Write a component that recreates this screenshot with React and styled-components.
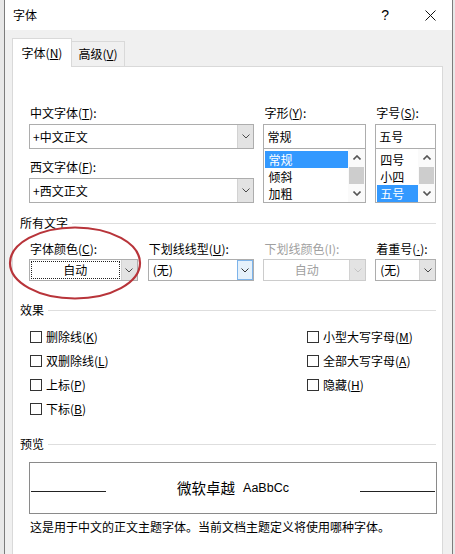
import React from "react"
import styled, { createGlobalStyle } from "styled-components"

const GlobalStyle = createGlobalStyle`
  html, body {
    margin: 0;
    padding: 0;
  }
  body {
    background: #e8e8e8;
    font-family: "Noto Sans CJK SC", "Microsoft YaHei", sans-serif;
    font-size: 12px;
    color: #000;
  }
`

const Window = styled.div`
  margin-left: 4px;
  width: 449px;
  height: 554px;
  box-sizing: border-box;
  border-left: 1px solid #7c7c7c;
  border-right: 1px solid #7c7c7c;
  background: #f0f0f0;
  overflow: hidden;
  display: flex;
  flex-direction: column;
`

const TitleBar = styled.div`
  height: 30px;
  flex: none;
  background: #fff;
  display: flex;
  align-items: center;
  padding-left: 8px;
  padding-right: 16px;
`

const Title = styled.span`
  font-size: 12px;
  line-height: 16px;
`

const HelpButton = styled.span`
  margin-left: auto;
  margin-right: 36px;
  font-family: "Liberation Sans", Arial, sans-serif;
  font-size: 14px;
  line-height: 16px;
`

const Body = styled.div`
  padding: 8px 9px 0 7px;
`

const TabRow = styled.div`
  display: flex;
  align-items: flex-end;
  height: 28px;
`

const Tab = styled.div`
  box-sizing: border-box;
  width: ${(p) => (p.$active ? "60px" : "53px")};
  height: ${(p) => (p.$active ? "29px" : "25px")};
  margin-bottom: ${(p) => (p.$active ? "-1px" : "0")};
  position: relative;
  z-index: ${(p) => (p.$active ? 1 : 0)};
  background: ${(p) => (p.$active ? "#fff" : "#f0f0f0")};
  border: 1px solid #d9d9d9;
  border-bottom: none;
  border-left: ${(p) => (p.$active ? "1px solid #d9d9d9" : "none")};
  display: flex;
  align-items: center;
  justify-content: center;
  line-height: 16px;
`

const Panel = styled.div`
  position: relative;
  height: 520px;
  background: #fff;
  border: 1px solid #d9d9d9;
`

const Content = styled.div`
  padding: 38px 6px 0 7px;
`

const Acc = styled.u`
  text-underline-offset: 1px;
`

const Dot = styled.u`
  font-family: "Liberation Sans", Arial, sans-serif;
  text-underline-offset: 1px;
`

const Label = styled.div`
  height: 16px;
  line-height: 16px;
  padding-left: 1px;
  white-space: nowrap;
  margin-top: ${(p) => p.$mt || 0}px;
  color: ${(p) => (p.$disabled ? "#a0a0a0" : "#000")};
`

const FontGrid = styled.div`
  display: flex;
  gap: 9px;
  margin-left: 9px;
`

const Column = styled.div`
  width: ${(p) => p.$w}px;
  display: flex;
  flex-direction: column;
`

const TextBox = styled.div`
  box-sizing: border-box;
  height: 25px;
  margin-top: 3px;
  border: 1px solid #adadad;
  display: flex;
  background: #fff;
`

const BoxText = styled.div`
  flex: 1;
  padding-left: 3px;
  display: flex;
  align-items: center;
  line-height: 16px;
`

const DropButton = styled.div`
  width: 16px;
  flex: none;
  box-sizing: border-box;
  background: ${(p) => (p.$hot ? "#e5f1fb" : "#e3e3e3")};
  border: ${(p) => (p.$hot ? "1px solid #7eb4ea" : "none")};
  border-left: 1px solid ${(p) => (p.$hot ? "#7eb4ea" : "#d2d2d2")};
  display: flex;
  align-items: center;
  justify-content: center;
`

const ListBox = styled.div`
  box-sizing: border-box;
  height: 55px;
  margin-top: -1px;
  border: 1px solid #adadad;
  display: flex;
  background: #fff;
`

const ListItems = styled.div`
  flex: 1;
  padding: 2px 0 0 1px;
`

const ListItem = styled.div`
  height: 17px;
  line-height: 17px;
  padding-left: 3px;
  background: ${(p) => (p.$selected ? "#3399ff" : "transparent")};
  color: ${(p) => (p.$selected ? "#fff" : "#000")};
`

const ScrollBar = styled.div`
  width: 17px;
  flex: none;
  background: #fafafa;
  display: flex;
  flex-direction: column;
`

const ScrollArrow = styled.div`
  height: 17px;
  display: flex;
  align-items: center;
  justify-content: center;
`

const ScrollTrack = styled.div`
  flex: 1;
  padding: 1px 1px 0;
`

const ScrollThumb = styled.div`
  height: 17px;
  background: #cdcdcd;
`

const SectionHeader = styled.div`
  display: flex;
  align-items: center;
  height: 16px;
  line-height: 16px;
  margin-top: ${(p) => p.$mt}px;
`

const HeaderLine = styled.div`
  flex: 1;
  height: 1px;
  margin-left: 4px;
  background: #dedede;
`

const ComboRow = styled.div`
  display: flex;
  margin-left: 9px;
  margin-top: 10px;
`

const ComboCol = styled.div`
  width: ${(p) => p.$w}px;
  margin-left: ${(p) => p.$ml || 0}px;
`

const Combo = styled.div`
  box-sizing: border-box;
  height: 22px;
  margin-top: 2px;
  border: 1px solid ${(p) => (p.$disabled ? "#cccccc" : "#adadad")};
  display: flex;
  background: #fff;
`

const ComboValue = styled.div`
  flex: 1;
  display: flex;
  align-items: center;
  justify-content: ${(p) => (p.$center ? "center" : "flex-start")};
  padding-left: ${(p) => (p.$center ? 0 : 4)}px;
  margin: ${(p) => (p.$focus ? "1px" : "0")};
  border: ${(p) => (p.$focus ? "1px dotted #222" : "none")};
  color: ${(p) => (p.$disabled ? "#a0a0a0" : "#000")};
  line-height: 16px;
`

const Checks = styled.div`
  display: flex;
  margin-left: 10px;
  margin-top: 7px;
`

const CheckCol = styled.div`
  width: ${(p) => p.$w || "auto"};
  display: flex;
  flex-direction: column;
`

const CheckRow = styled.label`
  height: 24px;
  display: flex;
  align-items: center;
  gap: 4px;
  line-height: 16px;
  white-space: nowrap;
`

const CheckBox = styled.span`
  width: 12px;
  height: 12px;
  box-sizing: border-box;
  border: 1px solid #333;
  background: #fff;
`

const PreviewBox = styled.div`
  box-sizing: border-box;
  width: 408px;
  height: 52px;
  margin: 10px 0 0 9px;
  border: 1px solid #8a8a8a;
  display: flex;
  align-items: center;
`

const PreviewLine = styled.div`
  width: 75px;
  height: 1px;
  margin: 7px 1px 0;
  background: #222;
`

const PreviewText = styled.div`
  flex: 1;
  display: flex;
  align-items: center;
  justify-content: center;
  gap: 8px;
`

const PreviewCjk = styled.span`
  font-size: 14.5px;
  line-height: 18px;
`

const PreviewLatin = styled.span`
  font-family: "Liberation Sans", Arial, sans-serif;
  font-size: 12.5px;
  line-height: 18px;
`

const Description = styled.div`
  margin: 5px 0 0 10px;
  line-height: 16px;
`

const Annotation = styled.svg`
  position: absolute;
  left: -5px;
  top: 158px;
  overflow: visible;
  pointer-events: none;
`

const Chevron = ({ up, color = "#4a4a4a", width = 1 }) => (
  <svg width="8" height="5" viewBox="0 0 8 5">
    <polyline
      points={up ? "0.5,4.5 4,1 7.5,4.5" : "0.5,0.5 4,4 7.5,0.5"}
      fill="none"
      stroke={color}
      strokeWidth={width}
    />
  </svg>
)

const List = ({ items, selected }) => (
  <ListBox>
    <ListItems>
      {items.map((it) => (
        <ListItem key={it} $selected={it === selected}>
          {it}
        </ListItem>
      ))}
    </ListItems>
    <ScrollBar>
      <ScrollArrow>
        <Chevron up color="#555" width={1.6} />
      </ScrollArrow>
      <ScrollTrack>
        <ScrollThumb />
      </ScrollTrack>
      <ScrollArrow>
        <Chevron color="#555" width={1.6} />
      </ScrollArrow>
    </ScrollBar>
  </ListBox>
)

const leftChecks = [
  ["删除线", "K"],
  ["双删除线", "L"],
  ["上标", "P"],
  ["下标", "B"],
]

const rightChecks = [
  ["小型大写字母", "M"],
  ["全部大写字母", "A"],
  ["隐藏", "H"],
]

export default function App() {
  return (
    <>
      <GlobalStyle />
      <Window>
        <TitleBar>
          <Title>字体</Title>
          <HelpButton>?</HelpButton>
          <svg width="11" height="11" viewBox="0 0 11 11">
            <path d="M0.5 0.5 L10.5 10.5 M10.5 0.5 L0.5 10.5" stroke="#111" strokeWidth="1" />
          </svg>
        </TitleBar>
        <Body>
          <TabRow>
            <Tab $active>
              字体(<Acc>N</Acc>)
            </Tab>
            <Tab>
              高级(<Acc>V</Acc>)
            </Tab>
          </TabRow>
          <Panel>
            <Content>
              <FontGrid>
                <Column $w={226}>
                  <Label>
                    中文字体(<Acc>T</Acc>):
                  </Label>
                  <TextBox>
                    <BoxText>+中文正文</BoxText>
                    <DropButton>
                      <Chevron />
                    </DropButton>
                  </TextBox>
                  <Label $mt={10}>
                    西文字体(<Acc>F</Acc>):
                  </Label>
                  <TextBox>
                    <BoxText>+西文正文</BoxText>
                    <DropButton>
                      <Chevron />
                    </DropButton>
                  </TextBox>
                </Column>
                <Column $w={103}>
                  <Label>
                    字形(<Acc>Y</Acc>):
                  </Label>
                  <TextBox>
                    <BoxText>常规</BoxText>
                  </TextBox>
                  <List items={["常规", "倾斜", "加粗"]} selected="常规" />
                </Column>
                <Column $w={61}>
                  <Label>
                    字号(<Acc>S</Acc>):
                  </Label>
                  <TextBox>
                    <BoxText>五号</BoxText>
                  </TextBox>
                  <List items={["四号", "小四", "五号"]} selected="五号" />
                </Column>
              </FontGrid>

              <SectionHeader $mt={12}>
                所有文字
                <HeaderLine />
              </SectionHeader>
              <ComboRow>
                <ComboCol $w={109}>
                  <Label>
                    字体颜色(<Acc>C</Acc>):
                  </Label>
                  <Combo>
                    <ComboValue $center $focus>
                      自动
                    </ComboValue>
                    <DropButton>
                      <Chevron />
                    </DropButton>
                  </Combo>
                </ComboCol>
                <ComboCol $w={107} $ml={10}>
                  <Label>
                    下划线线型(<Acc>U</Acc>):
                  </Label>
                  <Combo>
                    <ComboValue>(无)</ComboValue>
                    <DropButton $hot>
                      <Chevron color="#333" />
                    </DropButton>
                  </Combo>
                </ComboCol>
                <ComboCol $w={103} $ml={9}>
                  <Label $disabled>下划线颜色(I):</Label>
                  <Combo $disabled>
                    <ComboValue $center $disabled>
                      自动
                    </ComboValue>
                    <DropButton>
                      <Chevron color="#c4c4c4" />
                    </DropButton>
                  </Combo>
                </ComboCol>
                <ComboCol $w={61} $ml={9}>
                  <Label>
                    着重号(<Dot>·</Dot>):
                  </Label>
                  <Combo>
                    <ComboValue>(无)</ComboValue>
                    <DropButton>
                      <Chevron />
                    </DropButton>
                  </Combo>
                </ComboCol>
              </ComboRow>

              <SectionHeader $mt={21}>
                效果
                <HeaderLine />
              </SectionHeader>
              <Checks>
                <CheckCol $w="277px">
                  {leftChecks.map(([t, k]) => (
                    <CheckRow key={k}>
                      <CheckBox />
                      <span>
                        {t}(<Acc>{k}</Acc>)
                      </span>
                    </CheckRow>
                  ))}
                </CheckCol>
                <CheckCol>
                  {rightChecks.map(([t, k]) => (
                    <CheckRow key={k}>
                      <CheckBox />
                      <span>
                        {t}(<Acc>{k}</Acc>)
                      </span>
                    </CheckRow>
                  ))}
                </CheckCol>
              </Checks>

              <SectionHeader $mt={15}>
                预览
                <HeaderLine />
              </SectionHeader>
              <PreviewBox>
                <PreviewLine />
                <PreviewText>
                  <PreviewCjk>微软卓越</PreviewCjk>
                  <PreviewLatin>AaBbCc</PreviewLatin>
                </PreviewText>
                <PreviewLine />
              </PreviewBox>
              <Description>
                这是用于中文的正文主题字体。当前文档主题定义将使用哪种字体。
              </Description>
            </Content>

            <Annotation width="136" height="78" viewBox="0 0 136 78">
              <ellipse cx="67" cy="38" rx="65" ry="35.5" fill="none" stroke="#b8343a" strokeWidth="2.2" />
            </Annotation>
          </Panel>
        </Body>
      </Window>
    </>
  )
}
